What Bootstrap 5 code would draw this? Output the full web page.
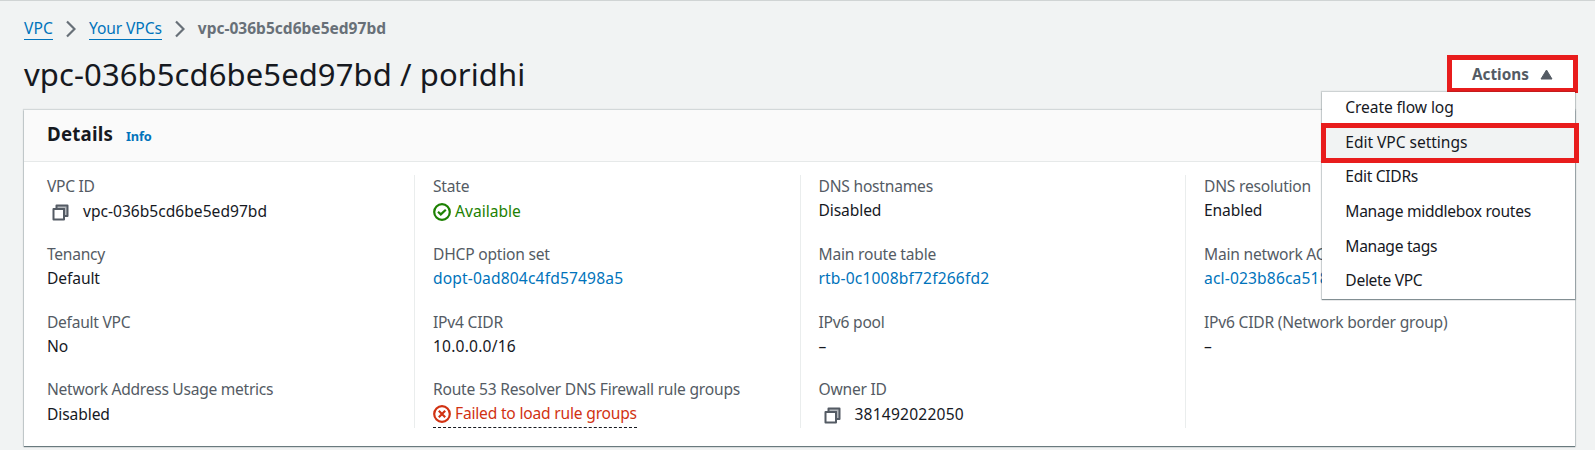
<!DOCTYPE html>
<html lang="en">
<head>
<meta charset="utf-8">
<meta name="viewport" content="width=device-width, initial-scale=1">
<title>VPC details</title>
<link href="https://cdn.jsdelivr.net/npm/bootstrap@5.3.0/dist/css/bootstrap.min.css" rel="stylesheet">
<style>
  body { background: #f1f3f3; color: #16191f; font-family: "Noto Sans", "Open Sans", sans-serif; font-size: 15.6px; letter-spacing: -.1px; line-height: 24px; height: 450px; overflow: hidden; border-top: 1px solid #d0d4d4; }
  a { color: #0073bb; text-decoration: none; }
  .page { padding: 16px 20px 0 24px; }
  .trail { height: 24px; }
  .trail a { border-bottom: 1px solid #0073bb; line-height: 20px; height: 21.5px; margin-top: 0; letter-spacing: -.1px; }
  .trail a:first-child { letter-spacing: .1px; }
  .trail svg { margin: 0 13px; }
  .trail .here { color: #687078; font-weight: 700; font-size: 15.5px; letter-spacing: .02px; line-height: 22px; margin-top: -2px; }
  .title-row { height: 68.5px; }
  .title-row h1 { font-size: 31px; letter-spacing: .1px; line-height: 36px; font-weight: 400; margin: 15px 0 0; }
  .actions { position: relative; margin: 13.5px -3px 0 0; }
  .btn-actions { width: 131.5px; height: 38px; background: #fff; border: 5px solid #e81c1c; border-radius: 0; color: #545b64; font-weight: 700; font-size: 15.3px; padding: 1px 20px 0 20.5px; line-height: 28px; }
  .action-menu { position: absolute; top: 37.5px; right: 3px; width: 253px; height: 207px; background: #fff; z-index: 5; padding: 0 0 0 1px; box-shadow: 0 1px 1px 0 rgba(0,28,36,.4), 0 0 1px 1px rgba(0,28,36,.15); }
  .action-menu a { color: #16191f; display: flex; align-items: center; height: 34.6px; padding: 0 0 4px 22.3px; font-size: 15.6px; letter-spacing: -.3px; }
  .action-menu a:first-child { letter-spacing: -.1px; }
  .action-menu a.marked { background: #f1f3f3; border: 5px solid #e81c1c; height: 40px; margin: -3.5px -3.5px -2px -2px; padding: 0 0 3px 19.3px; letter-spacing: -.05px; }
  .panel { background: #fff; height: 336.5px; box-shadow: 0 1px 1px 0 rgba(0,28,36,.5), 0 0 1px 1px rgba(0,28,36,.12); }
  .panel-head { background: #fafafa; height: 52px; border-bottom: 1px solid #e6e9e9; padding: 0 23px; }
  .panel-head h2 { font-size: 18.7px; font-weight: 700; line-height: 26px; margin: 11px 0 0; letter-spacing: .2px; }
  .panel-head a { font-size: 12.8px; font-weight: 700; margin: 14px 0 0 13px; line-height: 24px; letter-spacing: -.2px; }
  .panel-body { padding: 13.5px 4.5px 0 4.5px; }
  .cell-col { height: 253px; padding-left: 18px; border-left: 1px solid #eaeded; }
  .cell-col:first-child { border-color: transparent; padding-left: 17.5px; }
  .field { height: 67.7px; white-space: nowrap; padding-top: .3px; }
  .field-label { color: #545b64; letter-spacing: -.22px; height: 24.2px; line-height: 22px; }
  .cell-col:first-child .field-label { letter-spacing: -.28px; }
  .field-value { height: 24.5px; line-height: 23px; }
  .id-text { letter-spacing: 0; }
  .id-text a { letter-spacing: .15px; }
  .ok-text { color: #1d8102; letter-spacing: 0; }
  .bad-text { color: #d13212; letter-spacing: -.2px; border-bottom: 1px dashed #16191f; height: 25.5px; padding-bottom: 2px; }
  .copy-ico { margin: 2px 14px 0 5px; }
  .state-ico { margin: 1px 4px 0 0; }
  .field:last-child .id-text { letter-spacing: .2px; height: 23px; }
</style>
</head>
<body>
<main class="page">
  <nav class="trail d-flex align-items-center" aria-label="Breadcrumb">
    <a href="#">VPC</a>
    <svg width="10" height="18" viewBox="0 0 10 18" fill="none" stroke="#687078" stroke-width="2.2"><path d="M1 1.5 8.5 9 1 16.5"/></svg>
    <a href="#">Your VPCs</a>
    <svg width="10" height="18" viewBox="0 0 10 18" fill="none" stroke="#687078" stroke-width="2.2"><path d="M1 1.5 8.5 9 1 16.5"/></svg>
    <span class="here">vpc-036b5cd6be5ed97bd</span>
  </nav>

  <div class="title-row d-flex justify-content-between align-items-start">
    <h1>vpc-036b5cd6be5ed97bd / poridhi</h1>
    <div class="actions">
      <button class="btn btn-actions d-flex align-items-center justify-content-between" type="button">Actions
        <svg width="13" height="11" viewBox="0 0 13 11" fill="#545b64"><path d="M6.5 1 12 10H1Z" stroke="#545b64" stroke-linejoin="round"/></svg>
      </button>
      <div class="action-menu">
        <a href="#">Create flow log</a>
        <a href="#" class="marked">Edit VPC settings</a>
        <a href="#">Edit CIDRs</a>
        <a href="#">Manage middlebox routes</a>
        <a href="#">Manage tags</a>
        <a href="#">Delete VPC</a>
      </div>
    </div>
  </div>

  <section class="panel">
    <div class="panel-head d-flex align-items-start"><h2>Details</h2><a href="#">Info</a></div>
    <div class="panel-body">
      <div class="row g-0">
        <div class="col-3 cell-col">
          <div class="field"><div class="field-label">VPC ID</div><div class="field-value id-text d-flex align-items-center">
            <svg class="copy-ico" width="17" height="17" viewBox="0 0 17 17" fill="none" stroke="#545b64" stroke-width="2" stroke-linejoin="round"><path d="M4.5 1.5h11V12H12V5H4.5z" fill="#b4b8bc"/><path d="M1.5 5H12v10.5H1.5z" fill="#fff"/></svg>vpc-036b5cd6be5ed97bd</div></div>
          <div class="field"><div class="field-label">Tenancy</div><div class="field-value">Default</div></div>
          <div class="field"><div class="field-label">Default VPC</div><div class="field-value">No</div></div>
          <div class="field"><div class="field-label">Network Address Usage metrics</div><div class="field-value">Disabled</div></div>
        </div>
        <div class="col-3 cell-col">
          <div class="field"><div class="field-label">State</div><div class="field-value ok-text d-flex align-items-center">
            <svg class="state-ico" width="18" height="18" viewBox="0 0 18 18" fill="none" stroke="#1d8102" stroke-width="2.2"><circle cx="9" cy="9" r="7.8"/><path d="m5 8.8 2.8 2.6L12.8 6.8"/></svg>Available</div></div>
          <div class="field"><div class="field-label">DHCP option set</div><div class="field-value id-text"><a href="#">dopt-0ad804c4fd57498a5</a></div></div>
          <div class="field"><div class="field-label">IPv4 CIDR</div><div class="field-value" style="letter-spacing:.2px">10.0.0.0/16</div></div>
          <div class="field"><div class="field-label">Route 53 Resolver DNS Firewall rule groups</div><div class="field-value bad-text d-inline-flex align-items-center">
            <svg class="state-ico" width="18" height="18" viewBox="0 0 18 18" fill="none" stroke="#d13212" stroke-width="2.2"><circle cx="9" cy="9" r="7.8"/><path d="m5.8 5.8 6.4 6.4m0-6.4-6.4 6.4"/></svg>Failed to load rule groups</div></div>
        </div>
        <div class="col-3 cell-col">
          <div class="field"><div class="field-label">DNS hostnames</div><div class="field-value">Disabled</div></div>
          <div class="field"><div class="field-label">Main route table</div><div class="field-value id-text"><a href="#">rtb-0c1008bf72f266fd2</a></div></div>
          <div class="field"><div class="field-label">IPv6 pool</div><div class="field-value">–</div></div>
          <div class="field"><div class="field-label">Owner ID</div><div class="field-value id-text d-flex align-items-center">
            <svg class="copy-ico" width="17" height="17" viewBox="0 0 17 17" fill="none" stroke="#545b64" stroke-width="2" stroke-linejoin="round"><path d="M4.5 1.5h11V12H12V5H4.5z" fill="#b4b8bc"/><path d="M1.5 5H12v10.5H1.5z" fill="#fff"/></svg>381492022050</div></div>
        </div>
        <div class="col-3 cell-col">
          <div class="field"><div class="field-label">DNS resolution</div><div class="field-value">Enabled</div></div>
          <div class="field"><div class="field-label">Main network ACL</div><div class="field-value id-text"><a href="#">acl-023b86ca518</a></div></div>
          <div class="field"><div class="field-label">IPv6 CIDR (Network border group)</div><div class="field-value">–</div></div>
        </div>
      </div>
    </div>
  </section>
</main>
<script src="https://cdn.jsdelivr.net/npm/bootstrap@5.3.0/dist/js/bootstrap.bundle.min.js"></script>
</body>
</html>
